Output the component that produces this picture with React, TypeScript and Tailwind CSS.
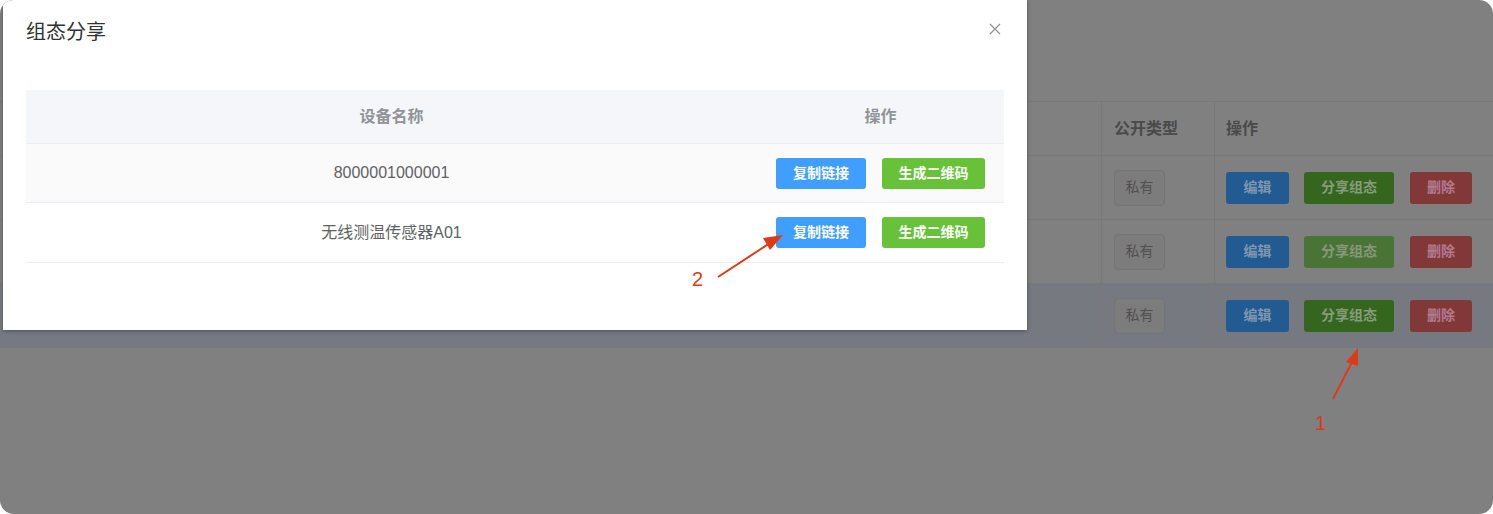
import React from "react";

const font = { fontFamily: '"Liberation Sans", "Noto Sans CJK SC", Arial, sans-serif' };

function BgRow({ hl, midGreen }: { hl?: boolean; midGreen?: boolean }) {
  return (
    <div className={`flex h-[64px] border-b border-[#787878] ${hl ? "bg-[#767a80]" : ""}`}>
      <div className="flex-1" />
      <div className="w-[113px] border-l border-[#787878] flex items-center pl-[12px]">
        <div className="w-[51px] h-[36px] rounded-[4px] border border-[#747474] bg-[#7c7c7c] flex items-center justify-center text-[14px] text-[#4f4f4f]">
          私有
        </div>
      </div>
      <div className="w-[279px] border-l border-[#787878] flex items-center pl-[11px]">
        <div className="w-[63px] h-[32px] rounded-[3px] bg-[#225a92] flex items-center justify-center text-[14px] font-bold text-[#8096ad]">
          编辑
        </div>
        <div
          className={`ml-[15px] w-[90px] h-[32px] rounded-[3px] flex items-center justify-center text-[14px] font-bold ${
            midGreen ? "bg-[#4a7336] text-[#86977c]" : "bg-[#34661e] text-[#869a7c]"
          }`}
        >
          分享组态
        </div>
        <div className="ml-[16px] w-[62px] h-[32px] rounded-[3px] bg-[#833838] flex items-center justify-center text-[14px] font-bold text-[#b07c92]">
          删除
        </div>
      </div>
    </div>
  );
}

function Btn({ color, children, w }: { color: string; children: React.ReactNode; w: string }) {
  return (
    <div className={`${color} ${w} h-[31px] rounded-[3px] flex items-center justify-center text-white text-[14px] font-bold`}>
      {children}
    </div>
  );
}

export default function App() {
  return (
    <div className="w-[1493px] h-[514px] bg-white" style={font}>
      <div className="relative w-full h-full rounded-[14px] overflow-hidden bg-[#808080]">
        {/* background page (dimmed) */}
        <div className="pt-[101px]">
          <div className="border-t border-[#787878]">
            <div className="flex h-[54px] border-b border-[#787878]">
              <div className="flex-1" />
              <div className="w-[113px] border-l border-[#787878] flex items-center pl-[12px] text-[16px] font-bold text-[#4a4a4a]">
                公开类型
              </div>
              <div className="w-[279px] border-l border-[#787878] flex items-center pl-[11px] text-[16px] font-bold text-[#4a4a4a]">
                操作
              </div>
            </div>
            <BgRow />
            <BgRow midGreen />
            <BgRow hl />
          </div>
        </div>

        {/* dialog */}
        <div className="absolute left-[3px] top-0 w-[1024px] h-[330px] bg-white shadow-[0_1px_4px_rgba(0,0,0,0.35)]">
          <div className="flex items-start justify-between pl-[23px] pr-[26px] pt-[18px]">
            <div className="text-[20px] leading-[28px] text-[#303133]">组态分享</div>
            <svg width="12" height="12" viewBox="0 0 12 12" className="mt-[5px]">
              <path d="M1 1 L11 11 M11 1 L1 11" stroke="#909399" strokeWidth="1.2" />
            </svg>
          </div>
          <div className="mx-[23px] mt-[44px]">
            <div className="flex h-[54px] bg-[#f5f6f9] border-b border-[#ebeef5] text-[16px] font-bold text-[#909399]">
              <div className="w-[731px] flex items-center justify-center">设备名称</div>
              <div className="flex-1 flex items-center justify-center">操作</div>
            </div>
            <div className="flex h-[59px] bg-[#fafafa] border-b border-[#ebeef5] text-[16px] text-[#606266]">
              <div className="w-[731px] flex items-center justify-center">8000001000001</div>
              <div className="flex-1 flex items-center justify-center gap-[16px]">
                <Btn color="bg-[#409eff]" w="w-[90px]">复制链接</Btn>
                <Btn color="bg-[#67c23a]" w="w-[103px]">生成二维码</Btn>
              </div>
            </div>
            <div className="flex h-[60px] bg-white border-b border-[#ebeef5] text-[16px] text-[#606266]">
              <div className="w-[731px] flex items-center justify-center">无线测温传感器A01</div>
              <div className="flex-1 flex items-center justify-center gap-[16px]">
                <Btn color="bg-[#409eff]" w="w-[90px]">复制链接</Btn>
                <Btn color="bg-[#67c23a]" w="w-[103px]">生成二维码</Btn>
              </div>
            </div>
          </div>
        </div>

        {/* annotation arrows */}
        <svg className="absolute left-0 top-0" width="1493" height="514" viewBox="0 0 1493 514">
          <g fill="#dd3a17" stroke="#dd3a17">
            <line x1="718" y1="277" x2="770" y2="243" strokeWidth="2" />
            <polygon points="783,235 763,238 770,250" stroke="none" />
            <line x1="1333" y1="399" x2="1352" y2="362" strokeWidth="2" />
            <polygon points="1358,348 1346,362 1358,366" stroke="none" />
          </g>
        </svg>
        <div className="absolute left-[692px] top-[267px] text-[20px] leading-[24px] text-[#dd3a17]">2</div>
        <div className="absolute left-[1315px] top-[411px] text-[20px] leading-[24px] text-[#dd3a17]">1</div>
      </div>
    </div>
  );
}
